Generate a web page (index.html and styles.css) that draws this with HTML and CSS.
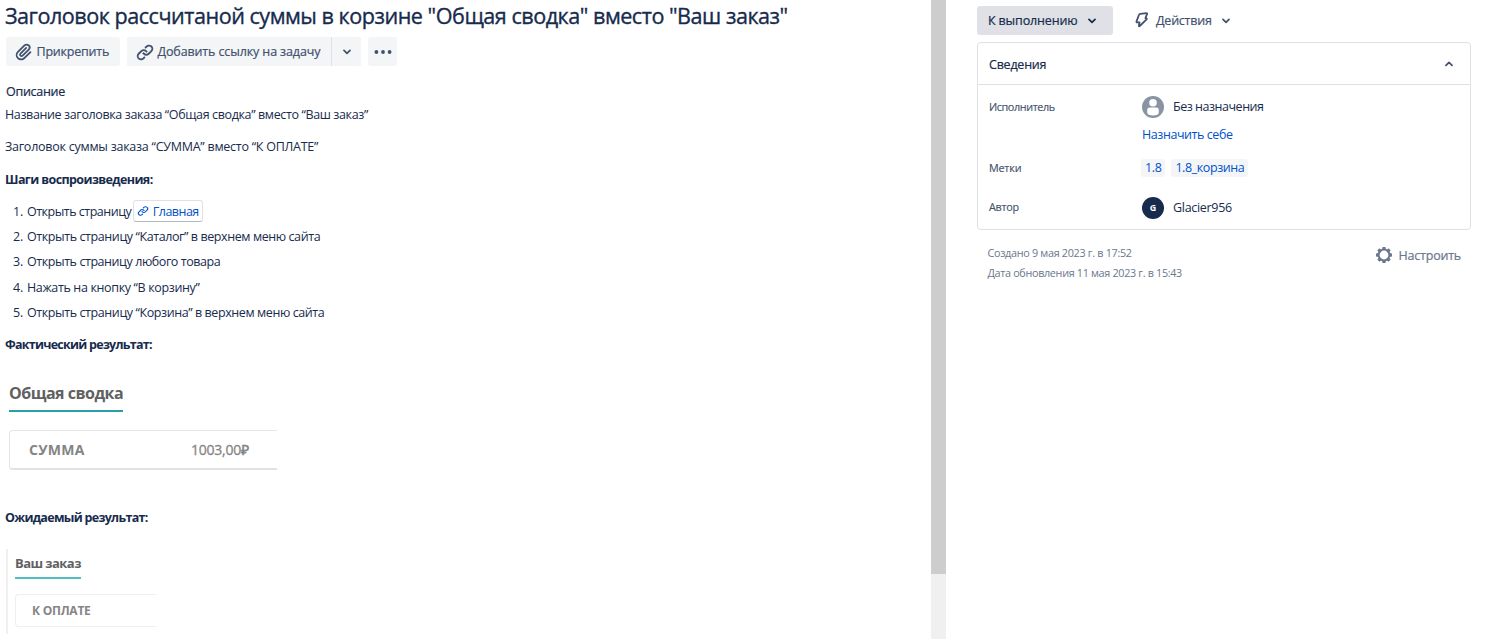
FILE: index.html
```html
<!DOCTYPE html>
<html lang="ru">
<head>
<meta charset="utf-8">
<title>Задача</title>
<link rel="stylesheet" href="styles.css">
</head>
<body>
<div class="page">
  <main class="issue">
    <h1 class="title"><span class="t-title">Заголовок рассчитаной суммы в корзине "Общая сводка" вместо "Ваш заказ"</span></h1>
    <div class="toolbar">
      <button class="btn attach">
        <svg width="22" height="22" viewBox="0 0 24 24"><path d="M11.643 17.965c-1.53 1.495-4.016 1.496-5.542.004a3.773 3.773 0 0 1 .002-5.412l7.147-6.985a2.316 2.316 0 0 1 3.233-.003c.893.873.895 2.282.004 3.153l-6.703 6.55a.653.653 0 0 1-.914-.008.62.62 0 0 1 0-.902l6.229-6.087a.941.941 0 0 0 0-1.353.995.995 0 0 0-1.384 0l-6.23 6.087a2.502 2.502 0 0 0 0 3.607 2.643 2.643 0 0 0 3.683.009l6.703-6.55a4.161 4.161 0 0 0-.003-5.859c-1.658-1.621-4.345-1.62-6.002.002l-7.148 6.985a5.628 5.628 0 0 0-.001 8.118c2.29 2.237 6.015 2.238 8.31-.005l6.686-6.533a.941.941 0 0 0 0-1.353.995.995 0 0 0-1.384 0l-6.686 6.535z"/></svg>
        <span class="t-attach">Прикрепить</span>
      </button>
      <div class="split">
        <button class="btn linkbtn">
          <svg width="22" height="22" viewBox="0 0 24 24"><path d="M12.856 5.457l-.937.92a1.002 1.002 0 0 0 0 1.437 1.047 1.047 0 0 0 1.463 0l.984-.966c.967-.95 2.542-1.135 3.602-.288a2.54 2.54 0 0 1 .203 3.81l-2.903 2.852a2.646 2.646 0 0 1-3.696 0l-1.11-1.09L9 13.57l1.108 1.089c1.822 1.788 4.802 1.788 6.622 0l2.905-2.852a4.558 4.558 0 0 0-.357-6.82c-1.893-1.517-4.695-1.226-6.422.47"/><path d="M11.144 19.543l.937-.92a1.002 1.002 0 0 0 0-1.437 1.047 1.047 0 0 0-1.462 0l-.985.966c-.967.95-2.542 1.135-3.602.288a2.54 2.54 0 0 1-.203-3.81l2.903-2.852a2.646 2.646 0 0 1 3.696 0l1.11 1.09L15 11.43l-1.108-1.089c-1.822-1.788-4.802-1.788-6.622 0l-2.905 2.852a4.558 4.558 0 0 0 .357 6.82c1.893 1.517 4.695 1.226 6.422-.47"/></svg>
          <span class="t-addlink">Добавить ссылку на задачу</span>
        </button>
        <button class="btn square"><svg width="8" height="6" viewBox="0 0 8 6"><path class="chev" d="M1 1.4l3 3 3-3"/></svg></button>
      </div>
      <button class="btn square more"><svg width="18" height="4" viewBox="0 0 18 4"><circle cx="2.4" cy="2" r="1.9"/><circle cx="9" cy="2" r="1.9"/><circle cx="15.6" cy="2" r="1.9"/></svg></button>
    </div>
    <h2 class="section"><span class="t-desc">Описание</span></h2>
    <p class="line first"><span class="t-p1">Название заголовка заказа “Общая сводка” вместо “Ваш заказ”</span></p>
    <p class="line"><span class="t-p2">Заголовок суммы заказа “СУММА” вместо “К ОПЛАТЕ”</span></p>
    <p class="line strong steps-head"><span class="t-steps">Шаги воспроизведения:</span></p>
    <ol class="steps">
      <li><span class="num">1.</span><span class="t-s1">Открыть страницу</span><a class="smart"><svg width="12" height="12" viewBox="2 2 20 21"><path d="M12.856 5.457l-.937.92a1.002 1.002 0 0 0 0 1.437 1.047 1.047 0 0 0 1.463 0l.984-.966c.967-.95 2.542-1.135 3.602-.288a2.54 2.54 0 0 1 .203 3.81l-2.903 2.852a2.646 2.646 0 0 1-3.696 0l-1.11-1.09L9 13.57l1.108 1.089c1.822 1.788 4.802 1.788 6.622 0l2.905-2.852a4.558 4.558 0 0 0-.357-6.82c-1.893-1.517-4.695-1.226-6.422.47"/><path d="M11.144 19.543l.937-.92a1.002 1.002 0 0 0 0-1.437 1.047 1.047 0 0 0-1.462 0l-.985.966c-.967.95-2.542 1.135-3.602.288a2.54 2.54 0 0 1-.203-3.81l2.903-2.852a2.646 2.646 0 0 1 3.696 0l1.11 1.09L15 11.43l-1.108-1.089c-1.822-1.788-4.802-1.788-6.622 0l-2.905 2.852a4.558 4.558 0 0 0 .357 6.82c1.893 1.517 4.695 1.226 6.422-.47"/></svg><span class="t-home">Главная</span></a></li>
      <li><span class="num">2.</span><span class="t-s2">Открыть страницу “Каталог” в верхнем меню сайта</span></li>
      <li><span class="num">3.</span><span class="t-s3">Открыть страницу любого товара</span></li>
      <li><span class="num">4.</span><span class="t-s4">Нажать на кнопку “В корзину”</span></li>
      <li><span class="num">5.</span><span class="t-s5">Открыть страницу “Корзина” в верхнем меню сайта</span></li>
    </ol>
    <p class="line strong actual-head"><span class="t-actual">Фактический результат:</span></p>
    <div class="shot actual">
      <div class="shot-title"><span class="t-sum">Общая сводка</span></div>
      <div class="shot-box"><b class="t-summa">СУММА</b><span class="t-price">1003,00₽</span></div>
    </div>
    <p class="line strong expected-head"><span class="t-exp">Ожидаемый результат:</span></p>
    <div class="shot expected">
      <div class="shot-title"><span class="t-order">Ваш заказ</span></div>
      <div class="shot-box"><b class="t-pay">К ОПЛАТЕ</b></div>
    </div>
  </main>
  <div class="scroll"><div class="thumb"></div></div>
  <aside class="side">
    <div class="status-row">
      <button class="status"><span class="t-status">К выполнению</span><svg width="8" height="6" viewBox="0 0 8 6"><path class="chev" d="M1 1.4l3 3 3-3"/></svg></button>
      <button class="actions"><svg class="bolt" width="14" height="16" viewBox="0 0 14 16"><path d="M5.3 1.8L11.6 1.2q.8 0 .5.8L10.4 6.2l1 .2q.7.3.2.9L4.7 14q-1 .7-.8-.4l.6-3.3H2.2q-.9 0-.7-.9L4 2.8q.3-.9 1.300-1z"/></svg><span class="t-actions">Действия</span><svg width="8" height="6" viewBox="0 0 8 6"><path class="chev" d="M1 1.4l3 3 3-3"/></svg></button>
    </div>
    <section class="card">
      <header class="card-head"><span class="t-details">Сведения</span><svg width="8" height="6" viewBox="0 0 8 6"><path class="chev" d="M1 4.4l3-3 3 3"/></svg></header>
      <dl class="fields">
        <dt><span class="t-f1">Исполнитель</span></dt>
        <dd><svg width="22" height="22" viewBox="0 0 22 22"><circle class="av" cx="11" cy="11" r="11"/><circle class="avf" cx="11" cy="6.8" r="3.8"/><path class="avf" d="M5.2 14q0-2.500 2.500-2.500h6.600q2.500 0 2.500 2.500v2.200q0 3.200-5.800 3.200t-5.800-3.200z"/></svg><span class="t-none">Без назначения</span></dd>
        <dt></dt><dd><a class="t-self">Назначить себе</a></dd>
        <dt><span class="t-f2">Метки</span></dt><dd><a class="tag"><span class="t-tag1">1.8</span></a><a class="tag"><span class="t-tag2">1.8_корзина</span></a></dd>
        <dt class="author"><span class="t-f3">Автор</span></dt><dd><span class="avatar">G</span><span class="t-author">Glacier956</span></dd>
      </dl>
    </section>
    <footer class="foot">
      <div class="dates"><div><span class="t-d1">Создано 9 мая 2023 г. в 17:52</span></div><div><span class="t-d2">Дата обновления 11 мая 2023 г. в 15:43</span></div></div>
      <button class="config"><svg width="16" height="16" viewBox="0 0 16 16"><circle class="ring" cx="8" cy="8" r="5.4"/><path d="M6.500 0h3l.4 3H6.100zM6.500 16h3l.4-3H6.100zM0 6.500v3l3 .4V6.100zM16 6.500v3l-3 .4V6.100zM1.300 3.400l2.100-2.100 2.400 1.900-2.600 2.600zM14.700 3.400l-2.100-2.100-2.400 1.900 2.600 2.600zM1.300 12.600l2.100 2.100 2.400-1.900-2.600-2.600zM14.700 12.600l-2.100 2.100-2.400-1.900 2.600-2.600z"/></svg><span class="t-config">Настроить</span></button>
    </footer>
  </aside>
</div>
</body>
</html>
```

FILE: styles.css
```css
* { box-sizing: border-box; }
body { margin: 0; background: #fff; color: #172b4d; font: 12.5px/20px "Open Sans", "Noto Sans", sans-serif; }
h1, h2, p, ol, dl, dd, dt { margin: 0; padding: 0; }
button { border: 0; margin: 0; padding: 0; background: none; font: inherit; color: inherit; text-align: left; }
svg { display: block; flex: none; fill: currentColor; }
.chev { fill: none; stroke: currentColor; stroke-width: 1.7; stroke-linecap: round; stroke-linejoin: round; }
span, b, a { white-space: nowrap; }

.page { display: flex; width: 1492px; height: 639px; overflow: hidden; }
.issue { width: 931px; padding-left: 5px; }
.scroll { width: 15px; background: #f0f0f0; }
.thumb { height: 574px; background: #cdcdcd; }
.side { flex: 1; padding: 6px 21px 0 31px; }

.title { height: 30px; font-size: 21.6px; line-height: 31px; font-weight: 500; padding-left: 0; -webkit-text-stroke: .35px currentColor; }
.toolbar { display: flex; gap: 7px; margin: 7px 0 0 1px; color: #42526e; }
.btn { display: flex; align-items: center; height: 29px; background: #f4f5f7; border-radius: 3px; font-weight: 500; }
.t-attach, .t-addlink, .section, .t-status, .t-actions, .t-details, .t-config { -webkit-text-stroke: .2px currentColor; }
.attach { width: 114px; padding-left: 7px; gap: 1.5px; }
.split { display: flex; gap: 1px; background: #dfe1e6; border-radius: 3px; }
.linkbtn { width: 204px; padding-left: 7px; gap: 1.5px; border-radius: 3px 0 0 3px; }
.btn svg, .btn span { margin-bottom: 0; }
.square { width: 29px; justify-content: center; border-radius: 0 3px 3px 0; }
.more { border-radius: 3px; }

.section { height: 20px; font-size: 12.5px; line-height: 22px; font-weight: 500; margin: 15px 0 0 1px; }
.line { height: 20px; line-height: 22px; margin-top: 12px; }
.line.first { margin-top: 3px; }
.strong { font-weight: 700; }
.line.steps-head { margin-top: 13px; }
.steps { list-style: none; margin-top: 9px; }
.steps li { display: flex; align-items: center; height: 25.3px; }
.steps li span { line-height: 18px; padding-top: 2px; }
.num { width: 14px; margin-left: 8px; letter-spacing: -.2px; }
.smart { display: flex; align-items: center; gap: 4px; height: 22px; width: 70px; margin-left: 1.500px; padding-left: 3px; border: 1px solid #dfe1e6; border-bottom-color: #b3bac5; border-radius: 3px; color: #0052cc; }
.line.actual-head { margin-top: 10px; }

.shot-title { font-weight: 700; color: #616161; }
.actual { width: 268px; margin: 28px 0 0 4px; }
.actual .shot-title { width: 114px; height: 30px; font-size: 16px; line-height: 22px; border-bottom: 2px solid #26a0a5; }
.shot-box { display: flex; align-items: center; border: 1px solid #e6e6e6; border-right: 0; border-radius: 4px 0 0 4px; color: #858585; }
.actual .shot-box { height: 40px; margin-top: 18px; padding-left: 19px; border-bottom: 2px solid #e2e2e2; font-size: 14px; }
.t-summa { width: 162px; letter-spacing: .3px; }
.t-price { font-weight: 500; -webkit-text-stroke: .3px currentColor; }
.line.expected-head { margin-top: 37px; }
.expected { width: 150px; height: 85px; margin: 22px 0 0 1px; padding: 5px 0 0 7px; border-left: 2px solid #f0f0f0; }
.expected .shot-title { width: 66px; height: 25px; font-size: 13px; line-height: 19px; border-bottom: 2px solid #54bcc6; }
.expected .shot-box { height: 33px; margin-top: 15px; padding-left: 16px; border-color: #efefef; font-size: 12px; }

.status-row { display: flex; font-weight: 500; }
.status-row span { padding-top: 1px; }
.status { display: flex; align-items: center; justify-content: space-between; width: 136px; height: 29px; padding: 0 17px 0 11px; background: #dfe1e6; border-radius: 3px; }
.actions { display: flex; align-items: center; margin-left: 22px; color: #42526e; }
.bolt { margin-top: -1px; fill: none; stroke: currentColor; stroke-width: 1.8; stroke-linejoin: round; }
.t-actions { width: 66px; margin-left: 7px; }
.card { height: 188px; margin-top: 7px; border: 1px solid #dfe1e6; border-radius: 4px; }
.card-head { display: flex; align-items: center; justify-content: space-between; height: 42px; padding: 0 17.5px 0 11px; border-bottom: 1px solid #dfe1e6; font-weight: 500; }
.card-head span { padding-top: 2px; }
.card-head svg { color: #42526e; }
.fields { display: grid; grid-template-columns: 153px 1fr; grid-template-rows: 30px 26px 40px 40px; padding: 7px 0 0 11px; }
.fields dt, .fields dd { display: flex; align-items: center; }
.fields dt { font-size: 10.8px; font-weight: 500; color: #42526e; -webkit-text-stroke: .15px currentColor; }
.fields dt.author { padding-bottom: 2px; }
.fields dd svg { margin-right: 9px; }
.av { fill: #8993a4; }
.avf { fill: #fff; }
.t-self, .tag { color: #0052cc; }
.tag { height: 18px; line-height: 17px; padding: 0 4px; margin-right: 6px; margin-left: -1px; background: #f4f5f7; border-radius: 3px; }
.tag + .tag { margin-left: 0; }
.avatar { width: 22px; height: 22px; margin: -1px 9px 0 0; border-radius: 50%; background: #172b4d; color: #fff; font-size: 9px; line-height: 22px; font-weight: 700; text-align: center; }
.foot { display: flex; justify-content: space-between; padding: 13px 10px 0 10.5px; }
.dates { font-size: 10.8px; color: #6b778c; }
.config { display: flex; align-items: center; gap: 7px; height: 24px; color: #6b778c; font-weight: 500; }
.config span { padding-top: 2px; }
.ring { fill: none; stroke: currentColor; stroke-width: 2; }

/* Per-label tracking */
.t-title { letter-spacing: -.49px; }
.t-attach, .t-actions, .t-details, .t-config { letter-spacing: -.22px; }
.t-addlink { letter-spacing: -.12px; }
.t-status { letter-spacing: -.15px; }
.t-desc { letter-spacing: -.28px; }
.t-p1 { letter-spacing: -.37px; }
.t-p2 { letter-spacing: -.25px; }
.t-steps { letter-spacing: -.6px; }
.t-s1 { letter-spacing: -.5px; }
.t-home { letter-spacing: -.5px; }
.t-s2, .t-s5 { letter-spacing: -.41px; }
.t-s3 { letter-spacing: -.43px; }
.t-s4 { letter-spacing: -.35px; }
.t-actual { letter-spacing: -.74px; }
.t-exp { letter-spacing: -.7px; }
.t-sum { letter-spacing: -.5px; }
.t-price { letter-spacing: -.25px; }
.t-order { letter-spacing: -.55px; }
.t-pay { letter-spacing: -.25px; }
.t-none { letter-spacing: -.47px; }
.t-self { letter-spacing: -.43px; }
.t-tag1 { letter-spacing: -.4px; }
.t-tag2 { letter-spacing: -.42px; }
.t-author { letter-spacing: -.3px; }
.t-f1 { letter-spacing: -.4px; }
.t-f2 { letter-spacing: -.2px; }
.t-f3, .t-d1 { letter-spacing: -.3px; }
.t-d2 { letter-spacing: -.32px; }
```
